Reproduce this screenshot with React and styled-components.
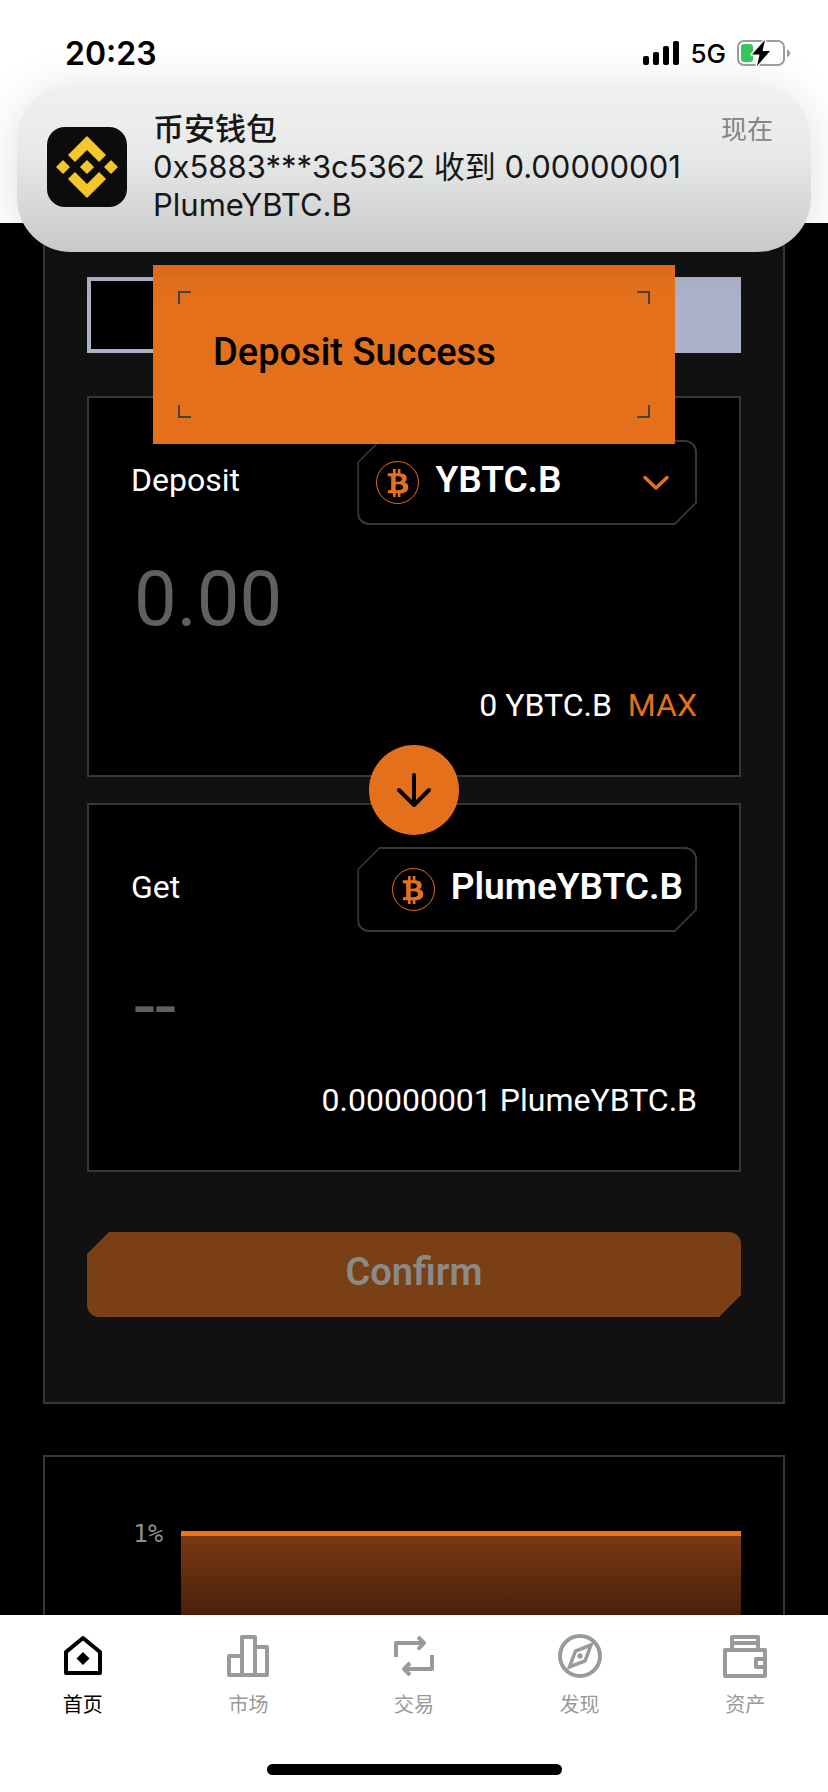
import React from "react";
import styled, { createGlobalStyle, css } from "styled-components";
import { FaBtc } from "react-icons/fa";

const ORANGE = "#e4701b";
const LINE = "#373737";

const GlobalStyle = createGlobalStyle`
  * {
    box-sizing: border-box;
  }

  body {
    margin: 0;
    background: #000;
    font-family: Roboto, "Noto Sans CJK SC", sans-serif;
  }

  button, input, select {
    font: inherit;
    color: inherit;
    border: 0;
    padding: 0;
    margin: 0;
    background: none;
  }
`;

const SignalIcon = () => (
  <svg width="36" height="24" viewBox="0 0 36 24" aria-hidden="true">
    <rect x="0" y="15" width="6" height="9" rx="2" />
    <rect x="10" y="11" width="6" height="13" rx="2" />
    <rect x="20" y="5" width="6" height="19" rx="2" />
    <rect x="30" y="0" width="6" height="24" rx="2" />
  </svg>
);

const BatteryIcon = () => (
  <svg width="53" height="28" viewBox="0 0 53 28" aria-hidden="true">
    <rect x="1" y="2" width="46" height="24" rx="6" fill="none" stroke="#9c9c9c" strokeWidth="2" />
    <path d="M50 10.500c4 1 4 6.500 0 7.500z" fill="#9c9c9c" />
    <rect x="4" y="5" width="12" height="18" rx="3" fill="#35c759" />
    <path
      d="M28 1 15 15.500h7.500L20 27 33 12h-7.500z"
      stroke="#fbfbfb"
      strokeWidth="3"
      paintOrder="stroke"
      strokeLinejoin="round"
    />
  </svg>
);

const WalletLogo = () => (
  <svg width="62" height="62" viewBox="0 0 126.61 126.61" fill="#f5c62a" aria-hidden="true">
    <path d="M38.73 53.2l24.59-24.58 24.6 24.6 14.3-14.31L63.32 0l-38.9 38.9z" />
    <path d="M0 63.31L14.3 49l14.31 14.31-14.31 14.3z" />
    <path d="M38.73 73.41L63.32 98l24.6-24.6 14.31 14.29-38.91 38.91-38.9-38.88z" />
    <path d="M98 63.31L112.3 49l14.31 14.3-14.31 14.32z" />
    <path d="M77.83 63.3L63.32 48.78 48.8 63.3l14.52 14.51z" />
  </svg>
);

const ChevronIcon = () => (
  <svg width="26" height="16" viewBox="0 0 26 16" aria-hidden="true">
    <path
      d="M2 2.500l11 10.500 11-10.500"
      fill="none"
      stroke={ORANGE}
      strokeWidth="3.500"
      strokeLinecap="round"
      strokeLinejoin="round"
    />
  </svg>
);

const ArrowDownIcon = () => (
  <svg width="36" height="36" viewBox="0 0 36 36" aria-hidden="true">
    <path
      d="M18 3v30M3 18l15 15 15-15"
      fill="none"
      stroke="#000"
      strokeWidth="4"
      strokeLinecap="round"
      strokeLinejoin="round"
    />
  </svg>
);

const navItems = [
  {
    label: "首页",
    active: true,
    icon: (
      <>
        <path d="M22 4 5 18v21h34V18z" />
        <path d="M22 18l6.500 6.500L22 31l-6.500-6.500z" fill="currentColor" stroke="none" />
      </>
    ),
  },
  {
    label: "市场",
    icon: <path d="M16 22H3v19h38V13H29M16 41V3h13v38" />,
  },
  {
    label: "交易",
    icon: (
      <>
        <path d="M4 23V9h27M40 21v14H14" />
        <path d="M26 3l6 6-6 6.500M18 29l-6 6 6 6" />
      </>
    ),
  },
  {
    label: "发现",
    icon: (
      <>
        <circle cx="22" cy="22" r="20" />
        <path d="M33 11l-15.500 6-6 16L27 27z" strokeLinejoin="miter" strokeWidth="3.500" />
        <circle cx="22" cy="22" r="2.700" fill="currentColor" stroke="none" />
      </>
    ),
  },
  {
    label: "资产",
    icon: (
      <>
        <rect x="2" y="16" width="40" height="26" />
        <path d="M9 16V3h26v13M9 9h26M42 25h-9v8h9" />
      </>
    ),
  },
];

const App = () => {
  return (
    <Screen>
      <GlobalStyle />
      <Header>
        <StatusBar>
          <Clock>20:23</Clock>
          <StatusIcons>
            <SignalIcon />
            <span>5G</span>
            <BatteryIcon />
          </StatusIcons>
        </StatusBar>
      </Header>

      <Notification role="status">
        <AppIcon>
          <WalletLogo />
        </AppIcon>
        <NotificationText>
          <h2>币安钱包</h2>
          <p>0x5883***3c5362 收到 0.00000001 PlumeYBTC.B</p>
        </NotificationText>
        <NotificationTime>现在</NotificationTime>
      </Notification>

      <Toast role="alert">
        <Corner $top $left />
        <Corner $top />
        <Corner $left />
        <Corner />
        Deposit Success
      </Toast>

      <Content>
        <Panel>
          <Modes>
            <ModeButton aria-label="Deposit" />
            <ModeButton aria-label="Withdraw" $filled />
          </Modes>

          <AmountBox>
            <BoxHead>
              <BoxLabel htmlFor="amount">Deposit</BoxLabel>
              <TokenField>
                <TokenIcon>
                  <FaBtc />
                </TokenIcon>
                <TokenSelect aria-label="Token" defaultValue="YBTC.B">
                  <option>YBTC.B</option>
                </TokenSelect>
                <ChevronIcon />
              </TokenField>
            </BoxHead>
            <AmountInput id="amount" inputMode="decimal" placeholder="0.00" />
            <Balance>
              <span>0 YBTC.B</span>
              <MaxButton>MAX</MaxButton>
            </Balance>
          </AmountBox>

          <SwapRow>
            <SwapButton aria-label="Swap">
              <ArrowDownIcon />
            </SwapButton>
          </SwapRow>

          <AmountBox $compact>
            <BoxHead>
              <BoxLabel htmlFor="received">Get</BoxLabel>
              <TokenField $end>
                <TokenIcon>
                  <FaBtc />
                </TokenIcon>
                <TokenName>PlumeYBTC.B</TokenName>
              </TokenField>
            </BoxHead>
            <AmountOutput id="received">--</AmountOutput>
            <Balance>
              <span>0.00000001 PlumeYBTC.B</span>
            </Balance>
          </AmountBox>

          <ConfirmButton disabled>Confirm</ConfirmButton>
        </Panel>

        <ChartPanel>
          <AxisLabel>1%</AxisLabel>
          <Chart aria-hidden="true">
            <defs>
              <linearGradient id="fill" x1="0" y1="0" x2="0" y2="1">
                <stop offset="0" stopColor="#7d3a13" />
                <stop offset="1" stopColor="#49200d" />
              </linearGradient>
            </defs>
            <rect width="100%" height="100%" fill="url(#fill)" />
            <rect width="100%" height="5" fill="#ef7318" />
          </Chart>
        </ChartPanel>
      </Content>

      <TabBar>
        <NavList>
          {navItems.map((item) => (
            <NavLink key={item.label} href="#" $active={item.active}>
              <svg width="44" height="44" viewBox="0 0 44 44" aria-hidden="true">
                {item.icon}
              </svg>
              {item.label}
            </NavLink>
          ))}
        </NavList>
        <HomeIndicator />
      </TabBar>
    </Screen>
  );
};

const Screen = styled.div`
  position: relative;
  display: flex;
  flex-direction: column;
  height: 100vh;
  overflow: hidden;
`;

const Header = styled.header`
  flex: none;
  height: 223px;
  background: #fff;
`;

const StatusBar = styled.div`
  display: flex;
  justify-content: space-between;
  align-items: center;
  height: 106px;
  padding: 0 38px 0 65px;
  font-family: Inter, sans-serif;
`;

const Clock = styled.time`
  position: relative;
  z-index: 4;
  font-size: 32px;
  font-weight: 600;
`;

const StatusIcons = styled.div`
  position: relative;
  z-index: 4;
  display: flex;
  align-items: center;
  gap: 11px;
  font-size: 26px;
  font-weight: 500;
`;

const Notification = styled.section`
  position: absolute;
  z-index: 3;
  top: 85px;
  left: 17px;
  right: 17px;
  display: flex;
  align-items: center;
  gap: 26px;
  padding: 25px 38px 28px 30px;
  border-radius: 54px;
  background: linear-gradient(#eff0f0, #e8e9e9 40%, #d8d9d9 70%, #c8c9c9);
  box-shadow: 0 4px 48px rgba(0, 0, 0, 0.12);
  color: #161616;
  font-family: Inter, "Noto Sans CJK SC", sans-serif;
`;

const AppIcon = styled.div`
  flex: none;
  display: flex;
  justify-content: center;
  align-items: center;
  width: 80px;
  height: 80px;
  border-radius: 18px;
  background: #0c0c0c;
`;

const NotificationText = styled.div`
  flex: 1;
  font-size: 31px;
  line-height: 38px;

  h2 {
    margin: 0;
    font-size: 31px;
    font-weight: 500;
  }

  p {
    margin: 0;
  }
`;

const NotificationTime = styled.time`
  align-self: flex-start;
  color: #868484;
  font-size: 26px;
  line-height: 40px;
`;

const Toast = styled.div`
  position: absolute;
  z-index: 2;
  top: 265px;
  left: 153px;
  right: 153px;
  padding: 65px 60px 70px;
  background: ${ORANGE};
  color: #000;
  font-size: 38px;
  font-weight: 500;
  line-height: 44px;
`;

const Corner = styled.span`
  position: absolute;
  width: 13px;
  height: 13px;
  border: 0 solid #444;
  ${(props) =>
    props.$top
      ? css`
          top: 26px;
          border-top-width: 2px;
        `
      : css`
          bottom: 26px;
          border-bottom-width: 2px;
        `}
  ${(props) =>
    props.$left
      ? css`
          left: 25px;
          border-left-width: 2px;
        `
      : css`
          right: 25px;
          border-right-width: 2px;
        `}
`;

const Content = styled.main`
  flex: 1;
  display: flex;
  flex-direction: column;
  min-height: 0;
  padding: 0 43px;
  overflow: hidden;
  color: #fff;
  font-size: 32px;
`;

const Panel = styled.section`
  flex: none;
  padding: 54px 42px 85px;
  border: 2px solid ${LINE};
  border-top: 0;
  background: #111;
`;

const Modes = styled.div`
  display: flex;
  height: 76px;
  margin-bottom: 43px;
`;

const ModeButton = styled.button`
  flex: 1;
  border: 4px solid #abb2c8;
  background: ${(props) => (props.$filled ? "#abb2c8" : "#000")};
`;

const AmountBox = styled.div`
  padding: 42px 42px 50px;
  border: 2px solid ${LINE};
  background: #000;

  & > :last-child {
    margin-top: ${(props) => (props.$compact ? "29px" : "41px")};
  }
`;

const BoxHead = styled.div`
  display: flex;
  justify-content: space-between;
  align-items: center;
  margin-bottom: 29px;
`;

const BoxLabel = styled.label`
  padding-bottom: 6px;
`;

/* Two corners are rounded, the other two are cut off at 22px */
const cutCorners = css`
  border-radius: 0 12px 0 12px;
  clip-path: polygon(
    22px 0,
    100% 0,
    100% calc(100% - 22px),
    calc(100% - 22px) 100%,
    0 100%,
    0 22px
  );
`;

const TokenField = styled.div`
  ${cutCorners}
  display: flex;
  justify-content: ${(props) => (props.$end ? "flex-end" : "flex-start")};
  align-items: center;
  gap: 16px;
  width: 60%;
  height: 85px;
  padding: ${(props) => (props.$end ? "0 12px" : "0 26px 0 17px")};
  border: 2px solid ${LINE};
  background: linear-gradient(
      135deg,
      ${LINE} 17px,
      transparent 17px calc(100% - 17px),
      ${LINE} calc(100% - 17px)
    )
    border-box;
  font-size: 37px;
  font-weight: 600;
`;

const TokenIcon = styled.span`
  flex: none;
  display: flex;
  justify-content: center;
  align-items: center;
  width: 43px;
  height: 43px;
  border: 1px solid ${ORANGE};
  border-radius: 50%;
  color: ${ORANGE};
  font-size: 28px;
`;

const TokenSelect = styled.select`
  flex: 1;
  min-width: 0;
  padding-bottom: 6px;
  appearance: none;
  line-height: 44px;
`;

const TokenName = styled.span`
  padding-bottom: 6px;
  line-height: 44px;
`;

const AmountInput = styled.input`
  display: block;
  width: 100%;
  height: 90px;
  padding-left: 3px;
  font-size: 76px;
  line-height: 90px;

  &::placeholder {
    color: #606060;
    opacity: 1;
  }
`;

const AmountOutput = styled.output`
  display: block;
  padding-left: 3px;
  color: #606060;
  font-size: 76px;
  line-height: 90px;
`;

const Balance = styled.div`
  display: flex;
  justify-content: flex-end;
  gap: 16px;
  line-height: 40px;
`;

const MaxButton = styled.button`
  color: ${ORANGE};
`;

const SwapRow = styled.div`
  position: relative;
  display: flex;
  justify-content: center;
  align-items: center;
  height: 26px;
`;

const SwapButton = styled.button`
  flex: none;
  display: flex;
  justify-content: center;
  align-items: center;
  width: 90px;
  height: 90px;
  border-radius: 50%;
  background: ${ORANGE};
`;

const ConfirmButton = styled.button`
  ${cutCorners}
  display: block;
  width: 100%;
  height: 85px;
  margin-top: 60px;
  padding-bottom: 6px;
  background: #7a3f15;
  color: #8a8a8a;
  font-size: 38px;
  font-weight: 600;
`;

const ChartPanel = styled.section`
  flex: 1;
  display: flex;
  min-height: 0;
  margin-top: 51px;
  padding: 74px 42px 0;
  border: 2px solid ${LINE};
  border-bottom: 0;
`;

const AxisLabel = styled.span`
  flex: none;
  width: 94px;
  padding-right: 18px;
  color: #8c8c8c;
  font-family: "DejaVu Sans Mono", monospace;
  font-size: 25px;
  line-height: 6px;
  text-align: right;
`;

const Chart = styled.svg`
  flex: 1;
  min-width: 0;
  height: 100%;
`;

const TabBar = styled.footer`
  flex: none;
  display: flex;
  flex-direction: column;
  align-items: center;
  padding: 19px 0 17px;
  background: #fff;
`;

const NavList = styled.nav`
  display: flex;
  align-self: stretch;
  margin-bottom: 45px;
`;

const NavLink = styled.a`
  flex: 1;
  display: flex;
  flex-direction: column;
  align-items: center;
  gap: 11px;
  color: ${(props) => (props.$active ? "#000" : "#9a9a9a")};
  font-family: "Noto Sans CJK SC", sans-serif;
  font-size: 20px;
  line-height: 30px;
  text-decoration: none;

  svg {
    fill: none;
    stroke: currentColor;
    stroke-width: 4;
    stroke-linejoin: round;
  }
`;

const HomeIndicator = styled.div`
  width: 295px;
  height: 11px;
  border-radius: 6px;
  background: #000;
`;

export default App;
